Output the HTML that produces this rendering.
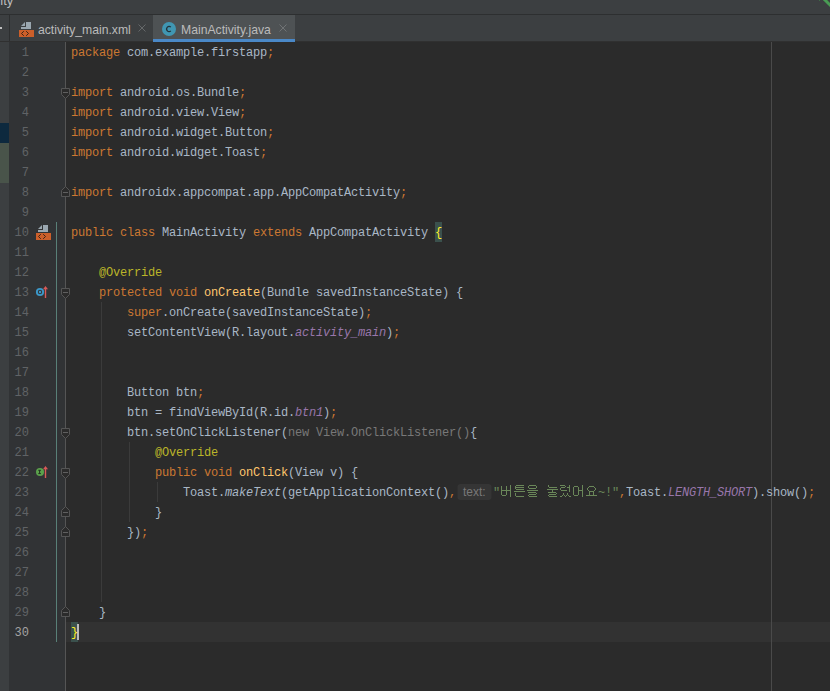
<!DOCTYPE html>
<html><head><meta charset="utf-8"><style>
*{margin:0;padding:0;box-sizing:border-box}
html,body{width:830px;height:691px;overflow:hidden;background:#2b2b2b}
body{position:relative;font-family:"Liberation Sans",sans-serif}
.abs{position:absolute}
.ln{position:absolute;left:9px;width:20px;margin-top:0.5px;text-align:right;font:12px/20px "Liberation Mono",monospace;letter-spacing:0.1px;color:#606366;white-space:pre}
.ln.cur{color:#a4a3a3}
.code{position:absolute;left:71px;margin-top:1px;font:12px/20px "Liberation Mono",monospace;letter-spacing:-0.2px;color:#a9b7c6;white-space:pre}
.br{color:#ffef28} .k{color:#cc7832} .a{color:#bbb529} .m{color:#ffc66d} .s{color:#9876aa;font-style:italic} .g{color:#787878}
i{font-style:italic}
.tabt{position:absolute;top:17px;height:26px;font-size:12.2px;line-height:26px;color:#bbbbbb;white-space:nowrap}
</style></head><body>
<!-- title bar -->
<div class="abs" style="left:0;top:0;width:830px;height:14px;background:#3c3f41"></div>
<div class="abs" style="left:-26.4px;top:-7.5px;font-size:13px;line-height:16px;color:#bbbbbb">activity</div>
<div class="abs" style="left:0;top:14px;width:830px;height:1px;background:#2d2f30"></div>
<!-- tab bar -->
<div class="abs" style="left:0;top:15px;width:830px;height:26px;background:#3c3f41"></div>
<div class="abs" style="left:9px;top:15px;width:1px;height:26px;background:#2d2f30"></div>
<div class="abs" style="left:0;top:27px;width:2px;height:2px;background:#c0c0c0"></div>
<div class="abs" style="left:0;top:41px;width:830px;height:1px;background:#303030"></div>
<div class="abs" style="left:153px;top:15px;width:142px;height:26px;background:#4e5254"></div>
<div class="abs" style="left:153px;top:39px;width:142px;height:3px;background:#4a88c7"></div>
<div class="tabt" style="left:38px">activity_main.xml</div>
<div class="tabt" style="left:181px">MainActivity.java</div>
<!-- left strip -->
<div class="abs" style="left:0;top:42px;width:9px;height:649px;background:#3c3f41"></div>
<div class="abs" style="left:0;top:123px;width:9px;height:20px;background:#0d293e"></div>
<div class="abs" style="left:0;top:143px;width:9px;height:40px;background:#49544a"></div>
<!-- gutter -->
<div class="abs" style="left:9px;top:42px;width:57px;height:649px;background:#313335"></div>
<!-- current line -->
<div class="abs" style="left:66px;top:622px;width:764px;height:20px;background:#323232"></div>
<div class="abs" style="left:71px;top:622px;width:7px;height:20px;background:#3b514d"></div>
<div class="abs" style="left:435px;top:222px;width:7px;height:20px;background:#3b514d"></div>
<svg class="abs" style="left:0;top:0" width="830" height="691">
<rect x="771" y="42" width="1" height="649" fill="#4a4a4a"/>
<rect x="56" y="222" width="1" height="420" fill="#598078"/>
<rect x="65" y="42" width="1" height="649" fill="#555555"/>
<rect x="101" y="302" width="1" height="300" fill="#3b3b3b"/>
<rect x="129" y="442" width="1" height="80" fill="#3b3b3b"/>
<rect x="157" y="482" width="1" height="20" fill="#3b3b3b"/>
<path d="M61.5 88.5H69.5V94.5L65.5 98.5L61.5 94.5Z" fill="#2b2b2b" stroke="#555"/><rect x="63" y="92" width="5" height="1" fill="#606060"/><path d="M61.5 196.5H69.5V190.5L65.5 186.5L61.5 190.5Z" fill="#2b2b2b" stroke="#555"/><rect x="63" y="192" width="5" height="1" fill="#606060"/><path d="M61.5 288.5H69.5V294.5L65.5 298.5L61.5 294.5Z" fill="#2b2b2b" stroke="#555"/><rect x="63" y="292" width="5" height="1" fill="#606060"/><path d="M61.5 428.5H69.5V434.5L65.5 438.5L61.5 434.5Z" fill="#2b2b2b" stroke="#555"/><rect x="63" y="432" width="5" height="1" fill="#606060"/><path d="M61.5 468.5H69.5V474.5L65.5 478.5L61.5 474.5Z" fill="#2b2b2b" stroke="#555"/><rect x="63" y="472" width="5" height="1" fill="#606060"/><path d="M61.5 516.5H69.5V510.5L65.5 506.5L61.5 510.5Z" fill="#2b2b2b" stroke="#555"/><rect x="63" y="512" width="5" height="1" fill="#606060"/><path d="M61.5 536.5H69.5V530.5L65.5 526.5L61.5 530.5Z" fill="#2b2b2b" stroke="#555"/><rect x="63" y="532" width="5" height="1" fill="#606060"/><path d="M61.5 616.5H69.5V610.5L65.5 606.5L61.5 610.5Z" fill="#2b2b2b" stroke="#555"/><rect x="63" y="612" width="5" height="1" fill="#606060"/>
<g transform="translate(0,0)"><path d="M43 225h5v7h-10v-2h5z" fill="#9aa7b0"/><path d="M38 229l4-4v4z" fill="#9aa7b0"/><rect x="36" y="233" width="15" height="7" fill="#cc5f2a"/><path d="M40.8 234.2l-2.3 2.3 2.3 2.3M43.2 234.2l2.3 2.3-2.3 2.3" fill="none" stroke="#3a2418" stroke-width="1"/></g>
<g transform="translate(-17,-203)"><path d="M43 225h5v7h-10v-2h5z" fill="#9aa7b0"/><path d="M38 229l4-4v4z" fill="#9aa7b0"/><rect x="36" y="233" width="15" height="7" fill="#cc5f2a"/><path d="M40.8 234.2l-2.3 2.3 2.3 2.3M43.2 234.2l2.3 2.3-2.3 2.3" fill="none" stroke="#3a2418" stroke-width="1"/></g>
<!-- tab close x -->
<path d="M138.5 24.5l7 7M145.5 24.5l-7 7" stroke="#65686a" stroke-width="1"/>
<path d="M279.5 24.5l7 7M286.5 24.5l-7 7" stroke="#707375" stroke-width="1"/>
<!-- C icon -->
<circle cx="169" cy="29" r="7" fill="#4096b2"/>
<path d="M170.8 27.2A2.4 2.6 0 1 0 170.8 30.8" fill="none" stroke="#22323a" stroke-width="1.25"/>
<!-- gutter override icons -->
<circle cx="40" cy="292" r="3.15" fill="none" stroke="#3b97c8" stroke-width="1.9"/>
<circle cx="40" cy="292" r="1.2" fill="#3b97c8"/>
<circle cx="40" cy="472" r="4" fill="#5ba24c"/>
<path d="M38.3 470.3h2.6M39.6 470.3v3.2M38.3 473.6h2.6" stroke="#233020" stroke-width="1"/>
<path d="M45.5 469V478" stroke="#d95a58" stroke-width="1.4"/><path d="M43 469.2L45.5 466L48 469.2Z" fill="#d95a58"/>
<path d="M45.5 289V298" stroke="#d95a58" stroke-width="1.4"/><path d="M43 289.2L45.5 286L48 289.2Z" fill="#d95a58"/>
<!-- caret -->
<rect x="77" y="624" width="2" height="16" fill="#bbbbbb"/>
<!-- hint box -->
<rect x="457.5" y="484" width="34" height="16" rx="3" fill="#353535"/>
<path d="M501 486h1v9h-1zM506 486h1v9h-1zM501 490h10v1h-10zM502 495h4v1h-4zM510 485h1v12h-1zM516 485h8v1h-8zM515 486h1v3h-1zM516 487h8v1h-8zM516 489h8v1h-8zM514 491h11v1h-11zM515 493h1v3h-1zM516 496h8v1h-8zM529 485h7v1h-7zM528 486h1v2h-1zM536 486h1v2h-1zM529 488h7v1h-7zM527 490h11v1h-11zM528 492h8v1h-8zM536 493h1v1h-1zM529 494h7v1h-7zM528 495h1v1h-1zM529 496h8v1h-8zM548 485h1v2h-1zM549 487h8v1h-8zM547 489h11v1h-11zM552 490h1v2h-1zM548 492h8v1h-8zM556 493h1v1h-1zM549 494h7v1h-7zM548 495h1v1h-1zM549 496h8v1h-8zM560 485h5v1h-5zM565 486h1v1h-1zM561 487h4v1h-4zM560 488h1v2h-1zM561 490h6v1h-6zM569 485h1v7h-1zM567 487h2v1h-2zM563 493h1v2h-1zM567 493h1v2h-1zM562 495h1v1h-1zM564 495h1v1h-1zM566 495h1v1h-1zM568 495h1v1h-1zM560 496h2v1h-2zM565 496h1v1h-1zM569 496h2v1h-2zM574 486h4v1h-4zM573 487h1v8h-1zM578 487h1v8h-1zM574 495h4v1h-4zM582 485h1v12h-1zM579 490h3v1h-3zM589 486h5v1h-5zM588 487h1v1h-1zM594 487h1v1h-1zM587 488h1v2h-1zM595 488h1v2h-1zM588 490h1v1h-1zM594 490h1v1h-1zM589 491h5v1h-5zM589 492h1v3h-1zM593 492h1v3h-1zM586 495h11v1h-11z" fill="#6a8759"/>
<!-- green arc top right -->
<path d="M823.5 -1.5L832 7" stroke="#499c54" stroke-width="3"/><rect x="819" y="0" width="1" height="1" fill="#3f6a48"/>
</svg>
<div class="ln" style="top:42px">1</div>
<div class="code" style="top:42px"><span class="k">package </span>com.example.firstapp<span class="k">;</span></div>
<div class="ln" style="top:62px">2</div>
<div class="ln" style="top:82px">3</div>
<div class="code" style="top:82px"><span class="k">import </span>android.os.Bundle<span class="k">;</span></div>
<div class="ln" style="top:102px">4</div>
<div class="code" style="top:102px"><span class="k">import </span>android.view.View<span class="k">;</span></div>
<div class="ln" style="top:122px">5</div>
<div class="code" style="top:122px"><span class="k">import </span>android.widget.Button<span class="k">;</span></div>
<div class="ln" style="top:142px">6</div>
<div class="code" style="top:142px"><span class="k">import </span>android.widget.Toast<span class="k">;</span></div>
<div class="ln" style="top:162px">7</div>
<div class="ln" style="top:182px">8</div>
<div class="code" style="top:182px"><span class="k">import </span>androidx.appcompat.app.AppCompatActivity<span class="k">;</span></div>
<div class="ln" style="top:202px">9</div>
<div class="ln" style="top:222px">10</div>
<div class="code" style="top:222px"><span class="k">public class </span>MainActivity <span class="k">extends </span>AppCompatActivity <span class="br">{</span></div>
<div class="ln" style="top:242px">11</div>
<div class="ln" style="top:262px">12</div>
<div class="code" style="top:262px">    <span class="a">@Override</span></div>
<div class="ln" style="top:282px">13</div>
<div class="code" style="top:282px">    <span class="k">protected void </span><span class="m">onCreate</span>(Bundle savedInstanceState) {</div>
<div class="ln" style="top:302px">14</div>
<div class="code" style="top:302px">        <span class="k">super</span>.onCreate(savedInstanceState)<span class="k">;</span></div>
<div class="ln" style="top:322px">15</div>
<div class="code" style="top:322px">        setContentView(R.layout.<span class="s">activity_main</span>)<span class="k">;</span></div>
<div class="ln" style="top:342px">16</div>
<div class="ln" style="top:362px">17</div>
<div class="ln" style="top:382px">18</div>
<div class="code" style="top:382px">        Button btn<span class="k">;</span></div>
<div class="ln" style="top:402px">19</div>
<div class="code" style="top:402px">        btn = findViewById(R.id.<span class="s">btn1</span>)<span class="k">;</span></div>
<div class="ln" style="top:422px">20</div>
<div class="code" style="top:422px">        btn.setOnClickListener(<span class="g">new View.OnClickListener()</span>{</div>
<div class="ln" style="top:442px">21</div>
<div class="code" style="top:442px">            <span class="a">@Override</span></div>
<div class="ln" style="top:462px">22</div>
<div class="code" style="top:462px">            <span class="k">public void </span><span class="m">onClick</span>(View v) {</div>
<div class="ln" style="top:482px">23</div>
<div class="code" style="top:482px">                Toast.<i>makeText</i>(getApplicationContext()<span class="k">,</span></div>
<div class="ln" style="top:502px">24</div>
<div class="code" style="top:502px">            }</div>
<div class="ln" style="top:522px">25</div>
<div class="code" style="top:522px">        })<span class="k">;</span></div>
<div class="ln" style="top:542px">26</div>
<div class="ln" style="top:562px">27</div>
<div class="ln" style="top:582px">28</div>
<div class="ln" style="top:602px">29</div>
<div class="code" style="top:602px">    }</div>
<div class="ln cur" style="top:622px">30</div>
<div class="code" style="top:622px"><span class="br">}</span></div>
<div class="code" style="top:480.5px;left:463px;font-family:'Liberation Sans',sans-serif;font-size:12px;letter-spacing:0;color:#787878">text:</div>
<div class="code" style="top:482px;left:493px;color:#6a8759">"</div>
<div class="code" style="top:482px;left:598px"><span style="color:#6a8759">~!"</span><span class="k">,</span>Toast.<span class="s">LENGTH_SHORT</span>).show()<span class="k">;</span></div>
</body></html>
